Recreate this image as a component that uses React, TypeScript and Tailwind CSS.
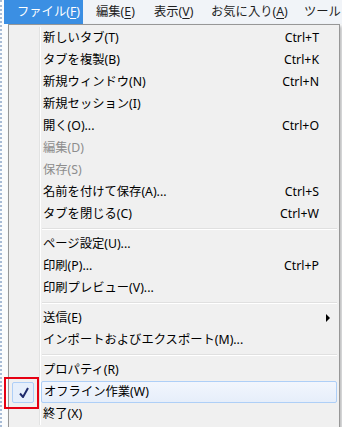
import React from "react";

type Item =
  | { kind: "sep" }
  | {
      kind: "item";
      label: string;
      shortcut?: string;
      disabled?: boolean;
      submenu?: boolean;
      checked?: boolean;
    };

const items: Item[] = [
  { kind: "item", label: "新しいタブ(T)", shortcut: "Ctrl+T" },
  { kind: "item", label: "タブを複製(B)", shortcut: "Ctrl+K" },
  { kind: "item", label: "新規ウィンドウ(N)", shortcut: "Ctrl+N" },
  { kind: "item", label: "新規セッション(I)" },
  { kind: "item", label: "開く(O)...", shortcut: "Ctrl+O" },
  { kind: "item", label: "編集(D)", disabled: true },
  { kind: "item", label: "保存(S)", disabled: true },
  { kind: "item", label: "名前を付けて保存(A)...", shortcut: "Ctrl+S" },
  { kind: "item", label: "タブを閉じる(C)", shortcut: "Ctrl+W" },
  { kind: "sep" },
  { kind: "item", label: "ページ設定(U)..." },
  { kind: "item", label: "印刷(P)...", shortcut: "Ctrl+P" },
  { kind: "item", label: "印刷プレビュー(V)..." },
  { kind: "sep" },
  { kind: "item", label: "送信(E)", submenu: true },
  { kind: "item", label: "インポートおよびエクスポート(M)..." },
  { kind: "sep" },
  { kind: "item", label: "プロパティ(R)" },
  { kind: "item", label: "オフライン作業(W)", checked: true },
  { kind: "item", label: "終了(X)" },
];

const menubar = [
  { name: "ファイル", key: "F", w: "w-[79px]", active: true },
  { name: "編集", key: "E", w: "w-[58px]" },
  { name: "表示", key: "V", w: "w-[57px]" },
  { name: "お気に入り", key: "A", w: "w-[93px]" },
  { name: "ツール", key: "", w: "w-[50px]" },
];

function Check() {
  return (
    <svg width="10" height="11" viewBox="0 0 10 11">
      <path d="M1 6.5 L4 10 L9 1" fill="none" stroke="#1f2a6b" strokeWidth="2" />
    </svg>
  );
}

export default function App() {
  return (
    <div className="relative flex h-[427px] w-[342px] overflow-hidden bg-[#fbfcfd] font-['Noto_Sans','Noto_Sans_CJK_JP',sans-serif] text-[12.3px] text-black">
      <div className="w-[4px] shrink-0 border-l-2 border-dotted border-[#a9bcd6]" />
      <div className="flex flex-1 flex-col">
        <div className="flex h-[24px] shrink-0 items-center bg-[#f1f4f8]">
          {menubar.map((m) => (
            <div
              key={m.name}
              className={`flex h-full shrink-0 items-center pl-[13px] whitespace-nowrap ${m.w} ${
                m.active ? "bg-[#3b8fe3] text-white" : "text-[#1e1e1e]"
              }`}
            >
              {m.name}
              {m.key && (
                <>
                  (<span className="underline underline-offset-2">{m.key}</span>)
                </>
              )}
            </div>
          ))}
        </div>
        <div className="flex flex-1">
          <div className="w-[4px] shrink-0" />
          <div className="h-[420px] w-[332px] shrink-0 border border-[#979797] bg-[#f0f0f0] px-[2px] pt-[2px] shadow-[2px_2px_3px_rgba(0,0,0,0.25)]">
            {items.map((it, i) =>
              it.kind === "sep" ? (
                <div key={i} className="flex h-[8px]">
                  <div className="w-[29px] shrink-0 border-r border-[#e2e3e3]" />
                  <div className="w-px bg-white" />
                  <div className="flex flex-1 flex-col justify-center pl-[1px]">
                    <div className="h-px bg-[#e0e0e0]" />
                    <div className="h-px bg-white" />
                  </div>
                </div>
              ) : (
                <div key={i} className="flex h-[22px] items-stretch">
                  <div className="flex w-[29px] shrink-0 items-center border-r border-[#e2e3e3] pl-[1px]">
                    {it.checked && (
                      <div className="flex h-[21px] w-[22px] items-center justify-center rounded-[2px] border border-[#aecff7] bg-[#e6effb] pl-[2px]">
                        <Check />
                      </div>
                    )}
                  </div>
                  <div className="w-px bg-white" />
                  <div
                    className={`flex flex-1 items-center pr-[18px] pl-[2px] ${
                      it.checked ? "rounded-[2px] border border-[#aecff7] bg-gradient-to-b from-[#f2f6fd] to-[#e6eefa] pl-[1px]" : ""
                    } ${it.disabled ? "text-[#8d8d8d]" : ""}`}
                  >
                    <span className="flex-1 whitespace-nowrap">{it.label}</span>
                    {it.shortcut && <span className="whitespace-nowrap">{it.shortcut}</span>}
                    {it.submenu && (
                      <span className="mr-[-11px] h-0 w-0 border-y-[4px] border-l-[4px] border-y-transparent border-l-black" />
                    )}
                  </div>
                </div>
              )
            )}
          </div>
        </div>
      </div>
      <div className="absolute top-[377px] left-[4px] h-[32px] w-[35px] border-2 border-[#e60012]" />
    </div>
  );
}
